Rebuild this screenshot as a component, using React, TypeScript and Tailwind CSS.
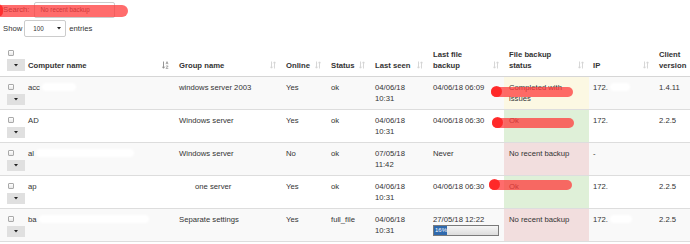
import React from 'react'

type Row = {
  name: string
  nameBlob?: number
  group: string
  groupOffset?: number
  online: string
  status: string
  lastSeen: [string, string]
  lastBackup: string
  progress?: number
  backupStatus: string[]
  tone: 'warn' | 'ok' | 'bad'
  ip: string
  ipBlob?: number
  version: string
  mark?: { top: number; left: number; width: number }
}

const rows: Row[] = [
  {
    name: 'acc',
    nameBlob: 34,
    group: 'windows server 2003',
    online: 'Yes',
    status: 'ok',
    lastSeen: ['04/06/18', '10:31'],
    lastBackup: '04/06/18 06:09',
    backupStatus: ['Completed with', 'issues'],
    tone: 'warn',
    ip: '172.',
    ipBlob: 20,
    version: '1.4.11',
    mark: { top: 10, left: -13, width: 82 },
  },
  {
    name: 'AD',
    group: 'Windows server',
    online: 'Yes',
    status: 'ok',
    lastSeen: ['04/06/18', '10:31'],
    lastBackup: '04/06/18 06:30',
    backupStatus: ['Ok'],
    tone: 'ok',
    ip: '172.',
    version: '2.2.5',
    mark: { top: 8, left: -12, width: 82 },
  },
  {
    name: 'al',
    nameBlob: 98,
    group: 'Windows server',
    online: 'No',
    status: 'ok',
    lastSeen: ['07/05/18', '11:42'],
    lastBackup: 'Never',
    backupStatus: ['No recent backup'],
    tone: 'bad',
    ip: '-',
    version: '',
  },
  {
    name: 'ap',
    group: 'one server',
    groupOffset: 16,
    online: 'Yes',
    status: 'ok',
    lastSeen: ['04/06/18', '10:31'],
    lastBackup: '04/06/18 06:30',
    backupStatus: ['Ok'],
    tone: 'ok',
    ip: '172.',
    version: '2.2.5',
    mark: { top: 4, left: -15, width: 83 },
  },
  {
    name: 'ba',
    nameBlob: 110,
    group: 'Separate settings',
    online: 'Yes',
    status: 'full_file',
    lastSeen: ['04/06/18', '10:31'],
    lastBackup: '27/05/18 12:22',
    progress: 16,
    backupStatus: ['No recent backup'],
    tone: 'bad',
    ip: '172.',
    ipBlob: 22,
    version: '2.2.5',
  },
]

const toneBg = {
  warn: 'bg-[#fcf8e3]',
  ok: 'bg-[#dff0d8]',
  bad: 'bg-[#f2dede]',
}

function Checkbox() {
  return (
    <div className="w-[6px] h-[6px] rounded-[1px] border border-[#a9a9a9] bg-gradient-to-b from-white to-[#e8e8e8]" />
  )
}

function MenuButton({ tall }: { tall?: boolean }) {
  return (
    <div
      className={`w-[18px] ${tall ? 'h-[12px]' : 'h-[11px]'} bg-[#e0e0e0] flex items-center justify-center`}
    >
      <svg width="4" height="3" viewBox="0 0 4 3">
        <path d="M0 0 L4 0 L2 2.6 Z" fill="#222" />
      </svg>
    </div>
  )
}

function SortIcon({ active }: { active?: boolean }) {
  if (active) {
    return (
      <svg width="7" height="8" viewBox="0 0 7 8" className="shrink-0 mb-[2px]">
        <path d="M1.5 0.5 V7 M0.2 5.6 L1.5 7.3 L2.8 5.6" stroke="#8a8a8a" strokeWidth="0.9" fill="none" />
        <path d="M4 3.2 L5 0.6 L6 3.2 M4.4 2.2 H5.6" stroke="#8a8a8a" strokeWidth="0.7" fill="none" />
        <path d="M4 5 H6.2 L4 7.4 H6.3" stroke="#8a8a8a" strokeWidth="0.7" fill="none" />
      </svg>
    )
  }
  return (
    <svg width="6" height="8" viewBox="0 0 6 8" className="shrink-0 mb-[2px]">
      <path d="M1.5 0.5 V7 M0.3 5.7 L1.5 7.2 L2.7 5.7" stroke="#d3d3d3" strokeWidth="0.9" fill="none" />
      <path d="M4.5 7.5 V1 M3.3 2.3 L4.5 0.8 L5.7 2.3" stroke="#d3d3d3" strokeWidth="0.9" fill="none" />
    </svg>
  )
}

function Blob({ w }: { w: number }) {
  return (
    <span
      className="inline-block h-[8px] bg-white rounded-full blur-[1px] align-middle ml-[2px]"
      style={{ width: w }}
    />
  )
}

function Th({ children, first, pl = 'pl-[5px]' }: { children: React.ReactNode; first?: boolean; pl?: string }) {
  return (
    <th className={`align-bottom ${pl} pr-[5px] pb-[4.5px] pt-[3px] text-left font-bold`}>
      <div className="flex items-end justify-between gap-[2px]">
        <div className="whitespace-nowrap">{children}</div>
        <SortIcon active={first} />
      </div>
    </th>
  )
}

export default function App() {
  return (
    <div className="w-[690px] h-[244px] overflow-hidden bg-white text-[#333] font-['Liberation_Sans',Arial,sans-serif] text-[7.7px] leading-[11px]">
      {/* search */}
      <div className="relative h-[18px] pt-[1px] flex items-center pl-[3px]">
        <span>Search:</span>
        <div className="ml-[4px] w-[81px] h-[16px] border border-[#ccc] rounded-[2px] flex items-center pl-[6px] text-[6.3px]">
          No recent backup
        </div>
        <div className="absolute left-[-4px] top-[4.5px] w-[132px] h-[12px] rounded-full bg-[#ff3b3b]/75" />
        <div className="absolute left-[-7px] top-[4px] w-[10px] h-[13px] rounded-full bg-[#ff2020]/80" />
      </div>

      {/* length */}
      <div className="mt-[2px] h-[17px] flex items-center pl-[3px]">
        <span>Show</span>
        <div className="ml-[2px] w-[42px] h-[17px] border border-[#ccc] rounded-[2px] flex items-center justify-between pl-[8px] pr-[4px] text-[6.3px]">
          <span>100</span>
          <svg width="4" height="3" viewBox="0 0 4 3">
            <path d="M0 0 L4 0 L2 2.6 Z" fill="#222" />
          </svg>
        </div>
        <span className="ml-[3px]">entries</span>
      </div>

      <table className="mt-[7px] w-[690px] table-fixed border-collapse">
        <colgroup>
          <col className="w-[26px]" />
          <col className="w-[148px]" />
          <col className="w-[107px]" />
          <col className="w-[45px]" />
          <col className="w-[44px]" />
          <col className="w-[58px]" />
          <col className="w-[76px]" />
          <col className="w-[85px]" />
          <col className="w-[65px]" />
          <col className="w-[36px]" />
        </colgroup>
        <thead>
          <tr className="border-b-[1.5px] border-[#d6d6d6]">
            <th className="align-bottom pl-[7px] pr-[1px] pt-[3px] pb-[4.5px]">
              <div className="h-[11px] flex items-center pl-[1px]">
                <Checkbox />
              </div>
              <div className="mt-[1px]">
                <MenuButton tall />
              </div>
            </th>
            <Th first pl="pl-[2px]">Computer name</Th>
            <Th>Group name</Th>
            <Th>Online</Th>
            <Th>Status</Th>
            <Th>Last seen</Th>
            <Th>
              Last file
              <br />
              backup
            </Th>
            <Th>
              File backup
              <br />
              status
            </Th>
            <Th pl="pl-[4px]">IP</Th>
            <th className="align-bottom pl-[5px] pb-[4.5px] text-left font-bold">
              Client
              <br />
              version
            </th>
          </tr>
        </thead>
        <tbody>
          {rows.map((r, i) => (
            <tr
              key={i}
              className={`h-[33px] border-b border-[#dddddd] align-top ${i % 2 === 0 ? 'bg-[#f9f9f9]' : 'bg-white'}`}
            >
              <td className="pl-[7px] pr-[1px] pt-[5px] pb-[3.5px]">
                <div className="h-[11px] flex items-center pl-[1px]">
                  <Checkbox />
                </div>
                <div className="mt-[1.5px]">
                  <MenuButton />
                </div>
              </td>
              <td className="pl-[2px] pt-[5px] whitespace-nowrap">
                {r.name}
                {r.nameBlob ? <Blob w={r.nameBlob} /> : null}
              </td>
              <td className="pl-[5px] pt-[5px] whitespace-nowrap">
                {r.groupOffset ? <span className="inline-block" style={{ width: r.groupOffset }} /> : null}
                {r.group}
              </td>
              <td className="pl-[5px] pt-[5px]">{r.online}</td>
              <td className="pl-[5px] pt-[5px]">{r.status}</td>
              <td className="pl-[5px] pt-[5px]">
                {r.lastSeen[0]}
                <br />
                {r.lastSeen[1]}
              </td>
              <td className="pl-[5px] pt-[5px] whitespace-nowrap">
                {r.lastBackup}
                {r.progress !== undefined && (
                  <div className="w-[66px] h-[11px] border border-[#7a7a7a] bg-gradient-to-b from-[#f6f6f6] to-[#dcdcdc] flex">
                    <div
                      className="h-full min-w-[13px] bg-[#2f69ad] text-white text-[6px] leading-[9px] pl-[1px]"
                      style={{ width: `${r.progress}%` }}
                    >
                      {r.progress}%
                    </div>
                  </div>
                )}
              </td>
              <td className={`relative pl-[5px] pt-[5px] ${toneBg[r.tone]}`}>
                {r.backupStatus.map((l, j) => (
                  <div key={j} className="whitespace-nowrap">
                    {l}
                  </div>
                ))}
                {r.mark && (
                  <>
                    <div
                      className="absolute h-[10px] rounded-full bg-[#ff3b3b]/75"
                      style={{ top: r.mark.top, left: r.mark.left, width: r.mark.width }}
                    />
                    <div
                      className="absolute w-[11px] h-[11px] rounded-full bg-[#ff2222]/90"
                      style={{ top: r.mark.top - 0.5, left: r.mark.left }}
                    />
                  </>
                )}
              </td>
              <td className="pl-[4px] pt-[5px] whitespace-nowrap">
                {r.ip}
                {r.ipBlob ? <Blob w={r.ipBlob} /> : null}
              </td>
              <td className="pl-[5px] pt-[5px]">{r.version}</td>
            </tr>
          ))}
        </tbody>
      </table>
    </div>
  )
}
